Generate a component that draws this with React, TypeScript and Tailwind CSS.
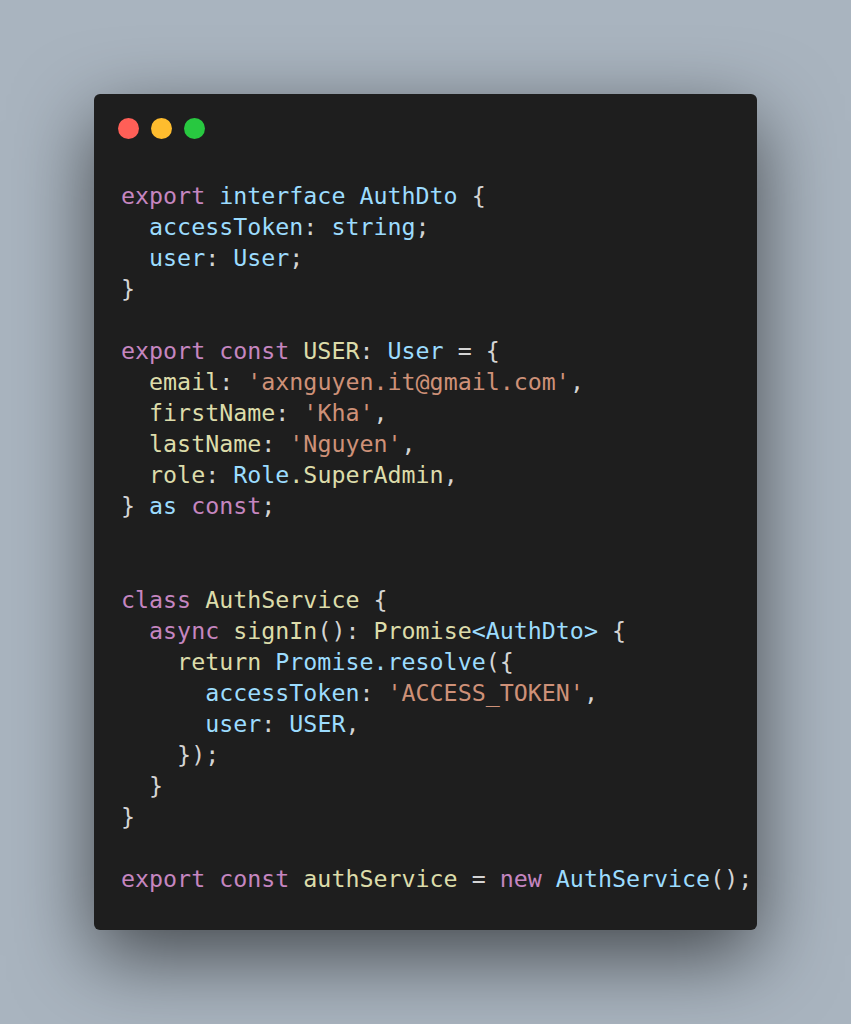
import React from "react";

type Tok = [string, string];

const P = "text-[#c586c0]";
const B = "text-[#9cdcfe]";
const Y = "text-[#dcdcaa]";
const S = "text-[#ce9178]";
const G = "text-[#d4d4d4]";

const lines: Tok[][] = [
  [[P, "export"], [G, " "], [B, "interface AuthDto"], [G, " {"]],
  [[G, "  "], [B, "accessToken"], [G, ": "], [B, "string"], [G, ";"]],
  [[G, "  "], [B, "user"], [G, ": "], [B, "User"], [G, ";"]],
  [[G, "}"]],
  [],
  [[P, "export const"], [G, " "], [Y, "USER"], [G, ": "], [B, "User"], [G, " = {"]],
  [[G, "  "], [Y, "email"], [G, ": "], [S, "'axnguyen.it@gmail.com'"], [G, ","]],
  [[G, "  "], [Y, "firstName"], [G, ": "], [S, "'Kha'"], [G, ","]],
  [[G, "  "], [Y, "lastName"], [G, ": "], [S, "'Nguyen'"], [G, ","]],
  [[G, "  "], [Y, "role"], [G, ": "], [B, "Role"], [Y, ".SuperAdmin"], [G, ","]],
  [[G, "} "], [B, "as"], [G, " "], [P, "const"], [G, ";"]],
  [],
  [],
  [[P, "class"], [G, " "], [Y, "AuthService"], [G, " {"]],
  [[G, "  "], [P, "async"], [G, " "], [Y, "signIn"], [G, "(): "], [Y, "Promise"], [B, "<AuthDto>"], [G, " {"]],
  [[G, "    "], [Y, "return"], [G, " "], [B, "Promise.resolve"], [G, "({"]],
  [[G, "      "], [B, "accessToken"], [G, ": "], [S, "'ACCESS_TOKEN'"], [G, ","]],
  [[G, "      "], [B, "user"], [G, ": "], [B, "USER"], [G, ","]],
  [[G, "    });"]],
  [[G, "  }"]],
  [[G, "}"]],
  [],
  [[P, "export const"], [G, " "], [Y, "authService"], [G, " = "], [P, "new"], [G, " "], [B, "AuthService"], [G, "();"]],
];

const App = () => {
  return (
    <div className="min-h-screen w-full bg-[#a9b4bf] flex justify-center pt-[94px] pb-[94px]">
      <div className="w-[663px] h-[836px] rounded-[6px] bg-[#1e1e1e] shadow-[0_26px_80px_rgba(0,0,0,0.6)] flex flex-col">
        {/* window dots */}
        <div className="flex gap-[12px] pl-[24px] pt-[24px]">
          <span className="w-[21px] h-[21px] rounded-full bg-[#ff5f57]" />
          <span className="w-[21px] h-[21px] rounded-full bg-[#febc2e]" />
          <span className="w-[21px] h-[21px] rounded-full bg-[#28c840]" />
        </div>

        <pre
          className="mt-[41px] pl-[27px] text-[23.3px] leading-[31.05px] whitespace-pre"
          style={{ fontFamily: '"DejaVu Sans Mono", monospace' }}
        >
          {lines.map((line, i) => (
            <div key={i} className="h-[31.05px]">
              {line.map(([cls, text], j) => (
                <span key={j} className={cls}>
                  {text}
                </span>
              ))}
            </div>
          ))}
        </pre>
      </div>
    </div>
  );
};

export default App;
